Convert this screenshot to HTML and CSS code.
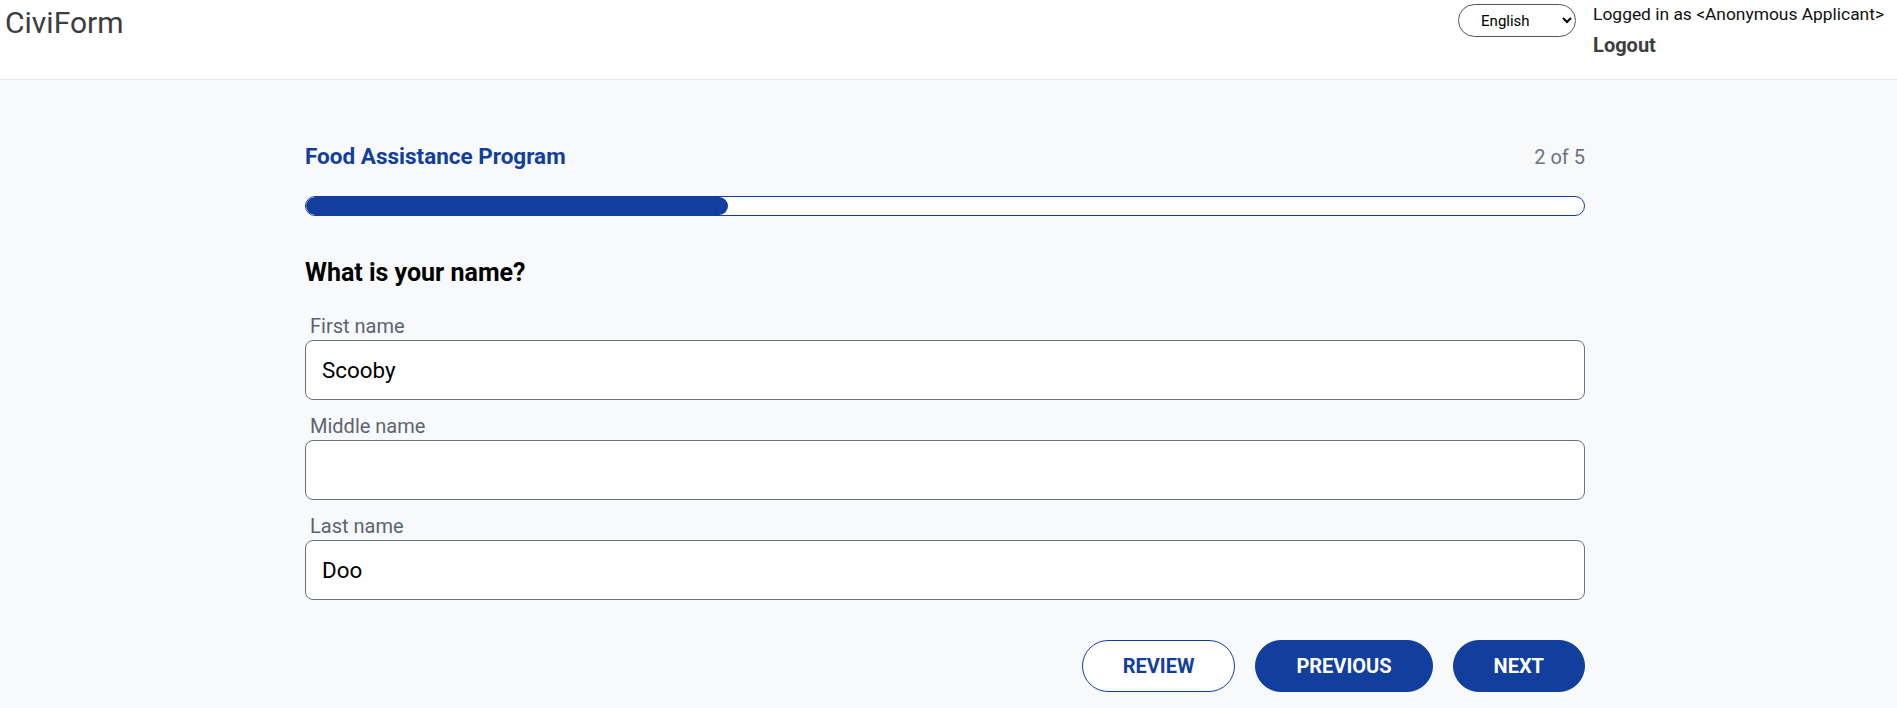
FILE: index.html
```html
<!DOCTYPE html>
<html lang="en">
<head>
<meta charset="utf-8">
<title>CiviForm</title>
<link rel="stylesheet" href="styles.css">
</head>
<body>
<header class="topbar">
  <div class="brand">CiviForm</div>
  <div class="account">
    <select class="lang-select" aria-label="Language">
      <option>English</option>
      <option>Español</option>
    </select>
    <div class="user">
      <div class="user-line">Logged in as &lt;Anonymous Applicant&gt;</div>
      <a class="logout" href="#">Logout</a>
    </div>
  </div>
</header>
<main class="page">
  <div class="container">
    <div class="program-row">
      <h1 class="program-title">Food Assistance Program</h1>
      <div class="step-count">2 of 5</div>
    </div>
    <div class="progress"><div class="progress-fill" style="width:33%"></div></div>
    <h2 class="question">What is your name?</h2>
    <div class="fields">
      <label class="field">
        <span class="field-label">First name</span>
        <input class="field-input" type="text" value="Scooby">
      </label>
      <label class="field">
        <span class="field-label">Middle name</span>
        <input class="field-input" type="text" value="">
      </label>
      <label class="field">
        <span class="field-label">Last name</span>
        <input class="field-input" type="text" value="Doo">
      </label>
    </div>
    <div class="actions">
      <button class="btn btn-outline">REVIEW</button>
      <button class="btn btn-solid">PREVIOUS</button>
      <button class="btn btn-solid">NEXT</button>
    </div>
  </div>
</main>
</body>
</html>
```

FILE: styles.css
```css
* { box-sizing: border-box; }
html, body { margin: 0; padding: 0; }
body {
  font-family: Roboto, "Noto Sans", "Liberation Sans", sans-serif;
  background: #f8f9fa;
  color: #111;
  height: 708px;
  overflow: hidden;
}
.topbar {
  background: #ffffff;
  height: 80px;
  border-bottom: 1px solid #e5e7eb;
  display: flex;
  justify-content: space-between;
  align-items: flex-start;
}
.brand {
  font-size: 30px;
  color: #3d3d3d;
  padding: 5px 0 0 5px;
  line-height: 35px;
}
.account {
  display: flex;
  align-items: flex-start;
  gap: 17px;
  padding: 2px 13px 0 0;
}
.lang-select {
  margin-top: 2px;
  width: 118px;
  height: 33px;
  border: 1px solid #555;
  border-radius: 9999px;
  background: #fff;
  font-family: Roboto, "Liberation Sans", sans-serif;
  font-size: 15px;
  color: #000;
  padding: 0 6px 0 18px;
}
.user {
  display: flex;
  flex-direction: column;
  gap: 5px;
}
.user-line {
  font-size: 17.4px;
  line-height: 24px;
  color: #111;
}
.logout {
  font-size: 20px;
  font-weight: 700;
  color: #3d3d3d;
  text-decoration: none;
  line-height: 28px;
}
.page {
  padding-top: 63px;
}
.container {
  width: 1280px;
  margin-left: 305px;
}
.program-row {
  display: flex;
  justify-content: space-between;
  align-items: baseline;
}
.program-title {
  margin: 0;
  font-size: 22.5px;
  font-weight: 700;
  color: #123f9e;
  line-height: 26px;
}
.step-count {
  font-size: 20px;
  color: #6b7280;
  line-height: 26px;
}
.progress {
  margin-top: 26px;
  height: 20px;
  border: 1px solid #123f9e;
  border-radius: 9999px;
  background: #fff;
  overflow: hidden;
}
.progress-fill {
  height: 100%;
  background: #123f9e;
  border-radius: 9999px;
}
.question {
  margin: 42px 0 0 0;
  font-size: 25px;
  font-weight: 700;
  color: #000;
  line-height: 29px;
}
.fields {
  margin-top: 28px;
  display: flex;
  flex-direction: column;
  gap: 15px;
}
.field {
  display: flex;
  flex-direction: column;
  gap: 3px;
}
.field-label {
  font-size: 20px;
  line-height: 22px;
  color: #5b6473;
  padding-left: 5px;
}
.field-input {
  height: 60px;
  width: 100%;
  border: 1px solid #6b7280;
  border-radius: 8px;
  background: #fff;
  padding: 0 16px;
  font-family: Roboto, "Liberation Sans", sans-serif;
  font-size: 22.4px;
  color: #000;
  outline: none;
}
.actions {
  margin-top: 40px;
  display: flex;
  justify-content: flex-end;
  gap: 20px;
}
.btn {
  height: 52px;
  border-radius: 9999px;
  font-family: Roboto, "Liberation Sans", sans-serif;
  font-size: 20px;
  font-weight: 700;
  padding: 0 40px;
  cursor: pointer;
}
.btn-outline {
  background: #fff;
  border: 1px solid #123f9e;
  color: #123f9e;
}
.btn-solid {
  background: #123f9e;
  border: 1px solid #123f9e;
  color: #fff;
}
```
